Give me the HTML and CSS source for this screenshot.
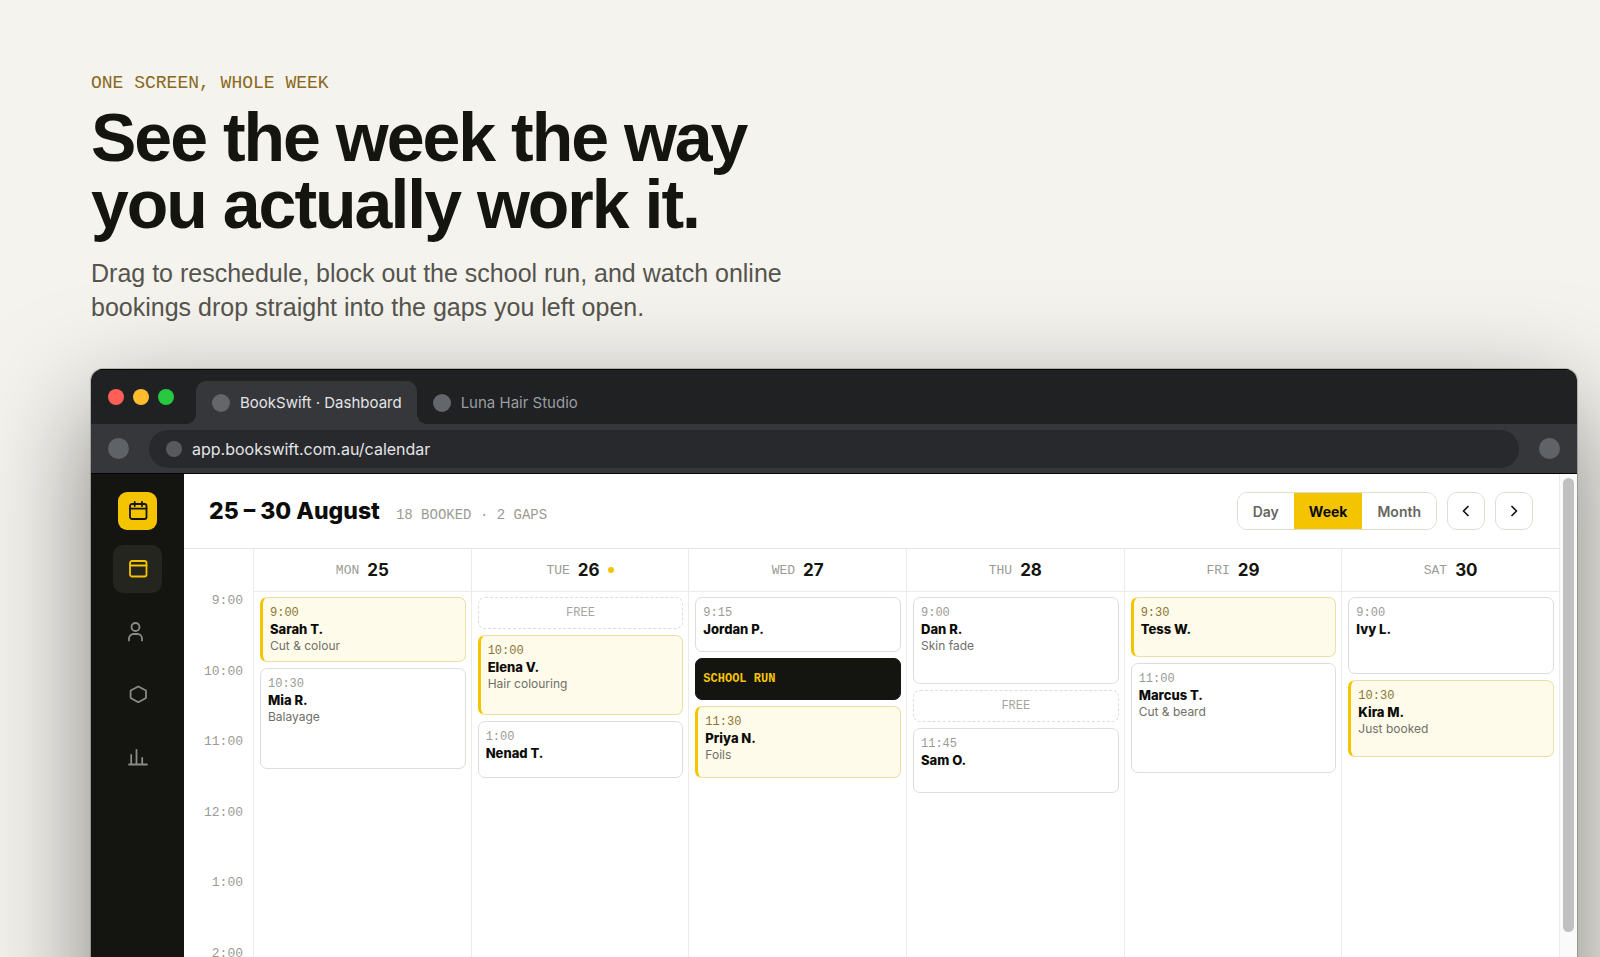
FILE: index.html
```html
<!DOCTYPE html>
<html lang="en">
<head>
<meta charset="utf-8">
<title>BookSwift · Dashboard</title>
<link rel="stylesheet" href="styles.css">
</head>
<body>
<main class="page">
  <header class="intro">
    <p class="eyebrow">ONE SCREEN, WHOLE WEEK</p>
    <h1 class="headline">See the week the way<br>you actually work it.</h1>
    <p class="lede">Drag to reschedule, block out the school run, and watch online<br>bookings drop straight into the gaps you left open.</p>
  </header>

  <section class="window" aria-label="BookSwift calendar">
    <div class="tabstrip">
      <div class="lights"><span class="light light-close"></span><span class="light light-min"></span><span class="light light-max"></span></div>
      <div class="tab tab-active"><span class="favicon"></span>BookSwift · Dashboard</div>
      <div class="tab"><span class="favicon"></span>Luna Hair Studio</div>
    </div>
    <div class="toolbar">
      <span class="knob"></span>
      <div class="address"><span class="site-dot"></span>app.bookswift.com.au/calendar</div>
      <span class="knob"></span>
    </div>

    <div class="app">
      <nav class="sidebar" aria-label="Sections">
        <a class="logo" href="#" aria-label="BookSwift"><svg viewBox="0 0 24 24"><rect x="4" y="5" width="16.500" height="15" rx="2"/><path d="M4 9.700h16.500M8.700 3v4M16 3v4"/></svg></a>
        <a class="nav-item nav-active" href="#" aria-label="Calendar"><svg viewBox="0 0 24 24"><rect x="4" y="4" width="16.500" height="15.500" rx="2"/><path d="M4 8.500h16.500"/></svg></a>
        <a class="nav-item" href="#" aria-label="Clients"><svg viewBox="0 0 24 24"><circle cx="9.500" cy="7" r="4"/><path d="M3 20.500v-2a4.500 4.500 0 0 1 4.500-4.500h4a4.500 4.500 0 0 1 4.500 4.500v2"/></svg></a>
        <a class="nav-item" href="#" aria-label="Services"><svg viewBox="0 0 24 24"><path d="M12.300 3.500l7.700 4v7.500l-7.700 4.200-7.700-4.200V7.500z"/></svg></a>
        <a class="nav-item" href="#" aria-label="Reports"><svg viewBox="0 0 24 24"><path d="M3 18.500h18M5.200 18.500V9M10.500 18.500V3.800M16.200 18.500V12"/></svg></a>
      </nav>

      <div class="calendar">
        <div class="cal-header">
          <h2 class="range">25 – 30 August</h2>
          <span class="summary">18 BOOKED · 2 GAPS</span>
          <div class="controls">
            <div class="views"><button class="view">Day</button><button class="view view-on">Week</button><button class="view">Month</button></div>
            <button class="step" aria-label="Previous week"><svg viewBox="0 0 16 16"><path d="M10 3.500L5.500 8l4.500 4.500"/></svg></button>
            <button class="step" aria-label="Next week"><svg viewBox="0 0 16 16"><path d="M6 3.500L10.500 8 6 12.500"/></svg></button>
          </div>
        </div>

        <div class="week">
          <div class="hours">
            <span>9:00</span><span>10:00</span><span>11:00</span><span>12:00</span><span>1:00</span><span>2:00</span>
          </div>
          <section class="day">
            <h3 class="day-head"><span class="dow">MON</span> 25</h3>
            <div class="slots">
              <article class="slot slot-new" style="height:65px"><time>9:00</time><strong>Sarah T.</strong><span>Cut &amp; colour</span></article>
              <article class="slot" style="height:101px"><time>10:30</time><strong>Mia R.</strong><span>Balayage</span></article>
            </div>
          </section>
          <section class="day">
            <h3 class="day-head"><span class="dow">TUE</span> 26 <i class="today"></i></h3>
            <div class="slots">
              <div class="slot slot-free">FREE</div>
              <article class="slot slot-new" style="height:80px"><time>10:00</time><strong>Elena V.</strong><span>Hair colouring</span></article>
              <article class="slot" style="height:57px"><time>1:00</time><strong>Nenad T.</strong></article>
            </div>
          </section>
          <section class="day">
            <h3 class="day-head"><span class="dow">WED</span> 27</h3>
            <div class="slots">
              <article class="slot" style="height:55px"><time>9:15</time><strong>Jordan P.</strong></article>
              <div class="slot slot-block">SCHOOL RUN</div>
              <article class="slot slot-new" style="height:72px"><time>11:30</time><strong>Priya N.</strong><span>Foils</span></article>
            </div>
          </section>
          <section class="day">
            <h3 class="day-head"><span class="dow">THU</span> 28</h3>
            <div class="slots">
              <article class="slot" style="height:87px"><time>9:00</time><strong>Dan R.</strong><span>Skin fade</span></article>
              <div class="slot slot-free">FREE</div>
              <article class="slot" style="height:65px"><time>11:45</time><strong>Sam O.</strong></article>
            </div>
          </section>
          <section class="day">
            <h3 class="day-head"><span class="dow">FRI</span> 29</h3>
            <div class="slots">
              <article class="slot slot-new" style="height:60px"><time>9:30</time><strong>Tess W.</strong></article>
              <article class="slot" style="height:110px"><time>11:00</time><strong>Marcus T.</strong><span>Cut &amp; beard</span></article>
            </div>
          </section>
          <section class="day">
            <h3 class="day-head"><span class="dow">SAT</span> 30</h3>
            <div class="slots">
              <article class="slot" style="height:77px"><time>9:00</time><strong>Ivy L.</strong></article>
              <article class="slot slot-new" style="height:77px"><time>10:30</time><strong>Kira M.</strong><span>Just booked</span></article>
            </div>
          </section>
        </div>
      </div>

      <div class="scrollbar"><span class="thumb"></span></div>
    </div>
  </section>
</main>
</body>
</html>
```
FILE: styles.css
```css
* { box-sizing: border-box; }

body {
  margin: 0;
  background: #f4f3ee;
  color: #15150f;
  font-family: Inter, "Liberation Sans", sans-serif;
}

.page {
  display: flex;
  flex-direction: column;
  height: 100vh;
  overflow: hidden;
  padding: 72px 23px 0 91px;
}

.eyebrow, .summary, .dow, .hours, .slot time, .slot-free, .slot-block {
  font-family: "Liberation Mono", monospace;
}

.eyebrow { margin: 0; color: #8a6820; font-size: 18px; line-height: 22px; }

.headline {
  margin: 10px 0 0;
  font-family: "Liberation Sans", sans-serif;
  font-size: 68px;
  font-weight: 700;
  line-height: 67px;
  letter-spacing: -2px;
}

.lede {
  margin: 18px 0 0;
  color: #55544d;
  font-family: "Liberation Sans", sans-serif;
  font-size: 25px;
  line-height: 34px;
}

.window {
  flex: none;
  display: flex;
  flex-direction: column;
  margin-top: 45px;
  min-height: 760px;
  border-radius: 12px;
  overflow: hidden;
  box-shadow: 0 0 0 1px rgba(0, 0, 0, .2), 0 40px 110px rgba(20, 20, 15, .52);
}

.tabstrip {
  display: flex;
  align-items: flex-end;
  height: 55px;
  padding-left: 17px;
  background: #202123;
  border-top: 1px solid #050505;
}

.lights { display: flex; align-self: center; gap: 9px; margin-right: 22px; }
.light { width: 16px; height: 16px; border-radius: 50%; }
.light-close { background: #ff5f57; }
.light-min { background: #febc2e; }
.light-max { background: #28c840; }

.tab {
  display: flex;
  align-items: center;
  gap: 10px;
  height: 43px;
  padding: 0 15px 0 16px;
  color: #9a9da1;
  font-size: 15px;
}

.tab-active {
  position: relative;
  background: #36373b;
  border-radius: 10px 10px 0 0;
  color: #e3e4e6;
}

.tab-active::before, .tab-active::after {
  content: "";
  position: absolute;
  bottom: 0;
  width: 10px;
  height: 10px;
}
.tab-active::before { right: 100%; background: radial-gradient(circle at 0 0, #202123 10px, #36373b 10px); }
.tab-active::after { left: 100%; background: radial-gradient(circle at 100% 0, #202123 10px, #36373b 10px); }

.favicon { width: 18px; height: 18px; border-radius: 50%; background: #63666b; }

.toolbar {
  display: flex;
  align-items: center;
  gap: 20px;
  height: 50px;
  padding: 0 17px;
  background: #36373b;
  border-bottom: 1px solid #050505;
}

.knob { width: 21px; height: 21px; border-radius: 50%; background: #5f6368; }

.address {
  flex: 1;
  display: flex;
  align-items: center;
  gap: 10px;
  height: 38px;
  padding-left: 17px;
  border-radius: 19px;
  background: #28292c;
  color: #e3e4e6;
  font-size: 16px;
}

.site-dot { width: 16px; height: 16px; border-radius: 50%; background: #56595d; }

.app { flex: 1; display: flex; background: #fff; }

.sidebar {
  display: flex;
  flex-direction: column;
  align-items: center;
  gap: 15px;
  width: 93px;
  padding-top: 18px;
  background: #141410;
}

.logo, .nav-item { display: grid; place-items: center; }
.logo { width: 39px; height: 38px; border-radius: 9px; background: #f5c400; color: #141410; }
.nav-item { width: 49px; height: 48px; border-radius: 10px; color: #8b8b86; }
.nav-active { background: #25251f; color: #f5c400; }

svg { fill: none; stroke: currentColor; stroke-linecap: round; stroke-linejoin: round; }
.sidebar svg { width: 24px; height: 24px; stroke-width: 1.8; }

.calendar { flex: 1; display: flex; flex-direction: column; }

.cal-header {
  display: flex;
  align-items: center;
  gap: 16px;
  height: 75px;
  padding: 0 26px 0 25px;
  border-bottom: 1px solid #e6e6e0;
}

.range { margin: 0; color: #0c0c08; font-size: 23px; font-weight: 800; line-height: 30px; }
.summary { padding-top: 8px; color: #9b9b94; font-size: 14px; }
.controls { display: flex; gap: 10px; margin-left: auto; }

.views { display: flex; overflow: hidden; border: 1px solid #deddd4; border-radius: 10px; }

.view {
  padding: 0 15px;
  border: 0;
  background: #fff;
  color: #66665f;
  font: 600 14px Inter, "Liberation Sans", sans-serif;
}
.view-on { background: #f5c400; color: #0c0c08; font-weight: 700; }

.step {
  display: grid;
  place-items: center;
  width: 38px;
  height: 38px;
  padding: 0;
  border: 1px solid #deddd4;
  border-radius: 10px;
  background: #fff;
  color: #15150f;
}
.step svg { width: 16px; height: 16px; stroke-width: 1.7; }

.week { flex: 1; display: grid; grid-template-columns: 69px repeat(6, 1fr); }

.hours {
  display: grid;
  grid-auto-rows: 1fr;
  height: 423px;
  margin-top: 44px;
  padding-right: 10px;
  color: #9b9b94;
  font-size: 13px;
  line-height: 16px;
  text-align: right;
}

.day { border-left: 1px solid #ecece6; }

.day-head {
  display: flex;
  align-items: center;
  justify-content: center;
  gap: 8px;
  height: 43px;
  margin: 0;
  border-bottom: 1px solid #ecece6;
  font-size: 17px;
  font-weight: 700;
}
.dow { color: #9b9b94; font-size: 13px; font-weight: 400; }
.today { width: 6px; height: 6px; border-radius: 50%; background: #f5c400; }

.slots { display: flex; flex-direction: column; gap: 6px; padding: 5px 5px 5px 6px; }

.slot {
  display: flex;
  flex-direction: column;
  padding: 7px;
  border: 1px solid #deddd9;
  border-radius: 7px;
  background: #fff;
  color: #6f6f69;
  font-size: 12px;
  line-height: 15px;
}
.slot time { color: #9b9b94; line-height: 16px; }
.slot strong { color: #0c0c08; font-size: 13px; font-weight: 800; line-height: 17px; }

.slot-new { border-color: #ecdfa6; border-left: 3px solid #f5c400; background: #fffbea; }
.slot-new time { color: #8a7434; }

.slot-free, .slot-block { justify-content: center; }
.slot-free { align-items: center; height: 32px; border-style: dashed; color: #a5a59f; }
.slot-block { height: 42px; border-color: #141410; background: #141410; color: #f5c400; font-weight: 700; }

.scrollbar { width: 18px; padding: 4px 3px; border-left: 1px solid #ececec; background: #fafafa; }
.thumb { display: block; height: 454px; border-radius: 6px; background: #c0c0c0; width: 11px; }
```
